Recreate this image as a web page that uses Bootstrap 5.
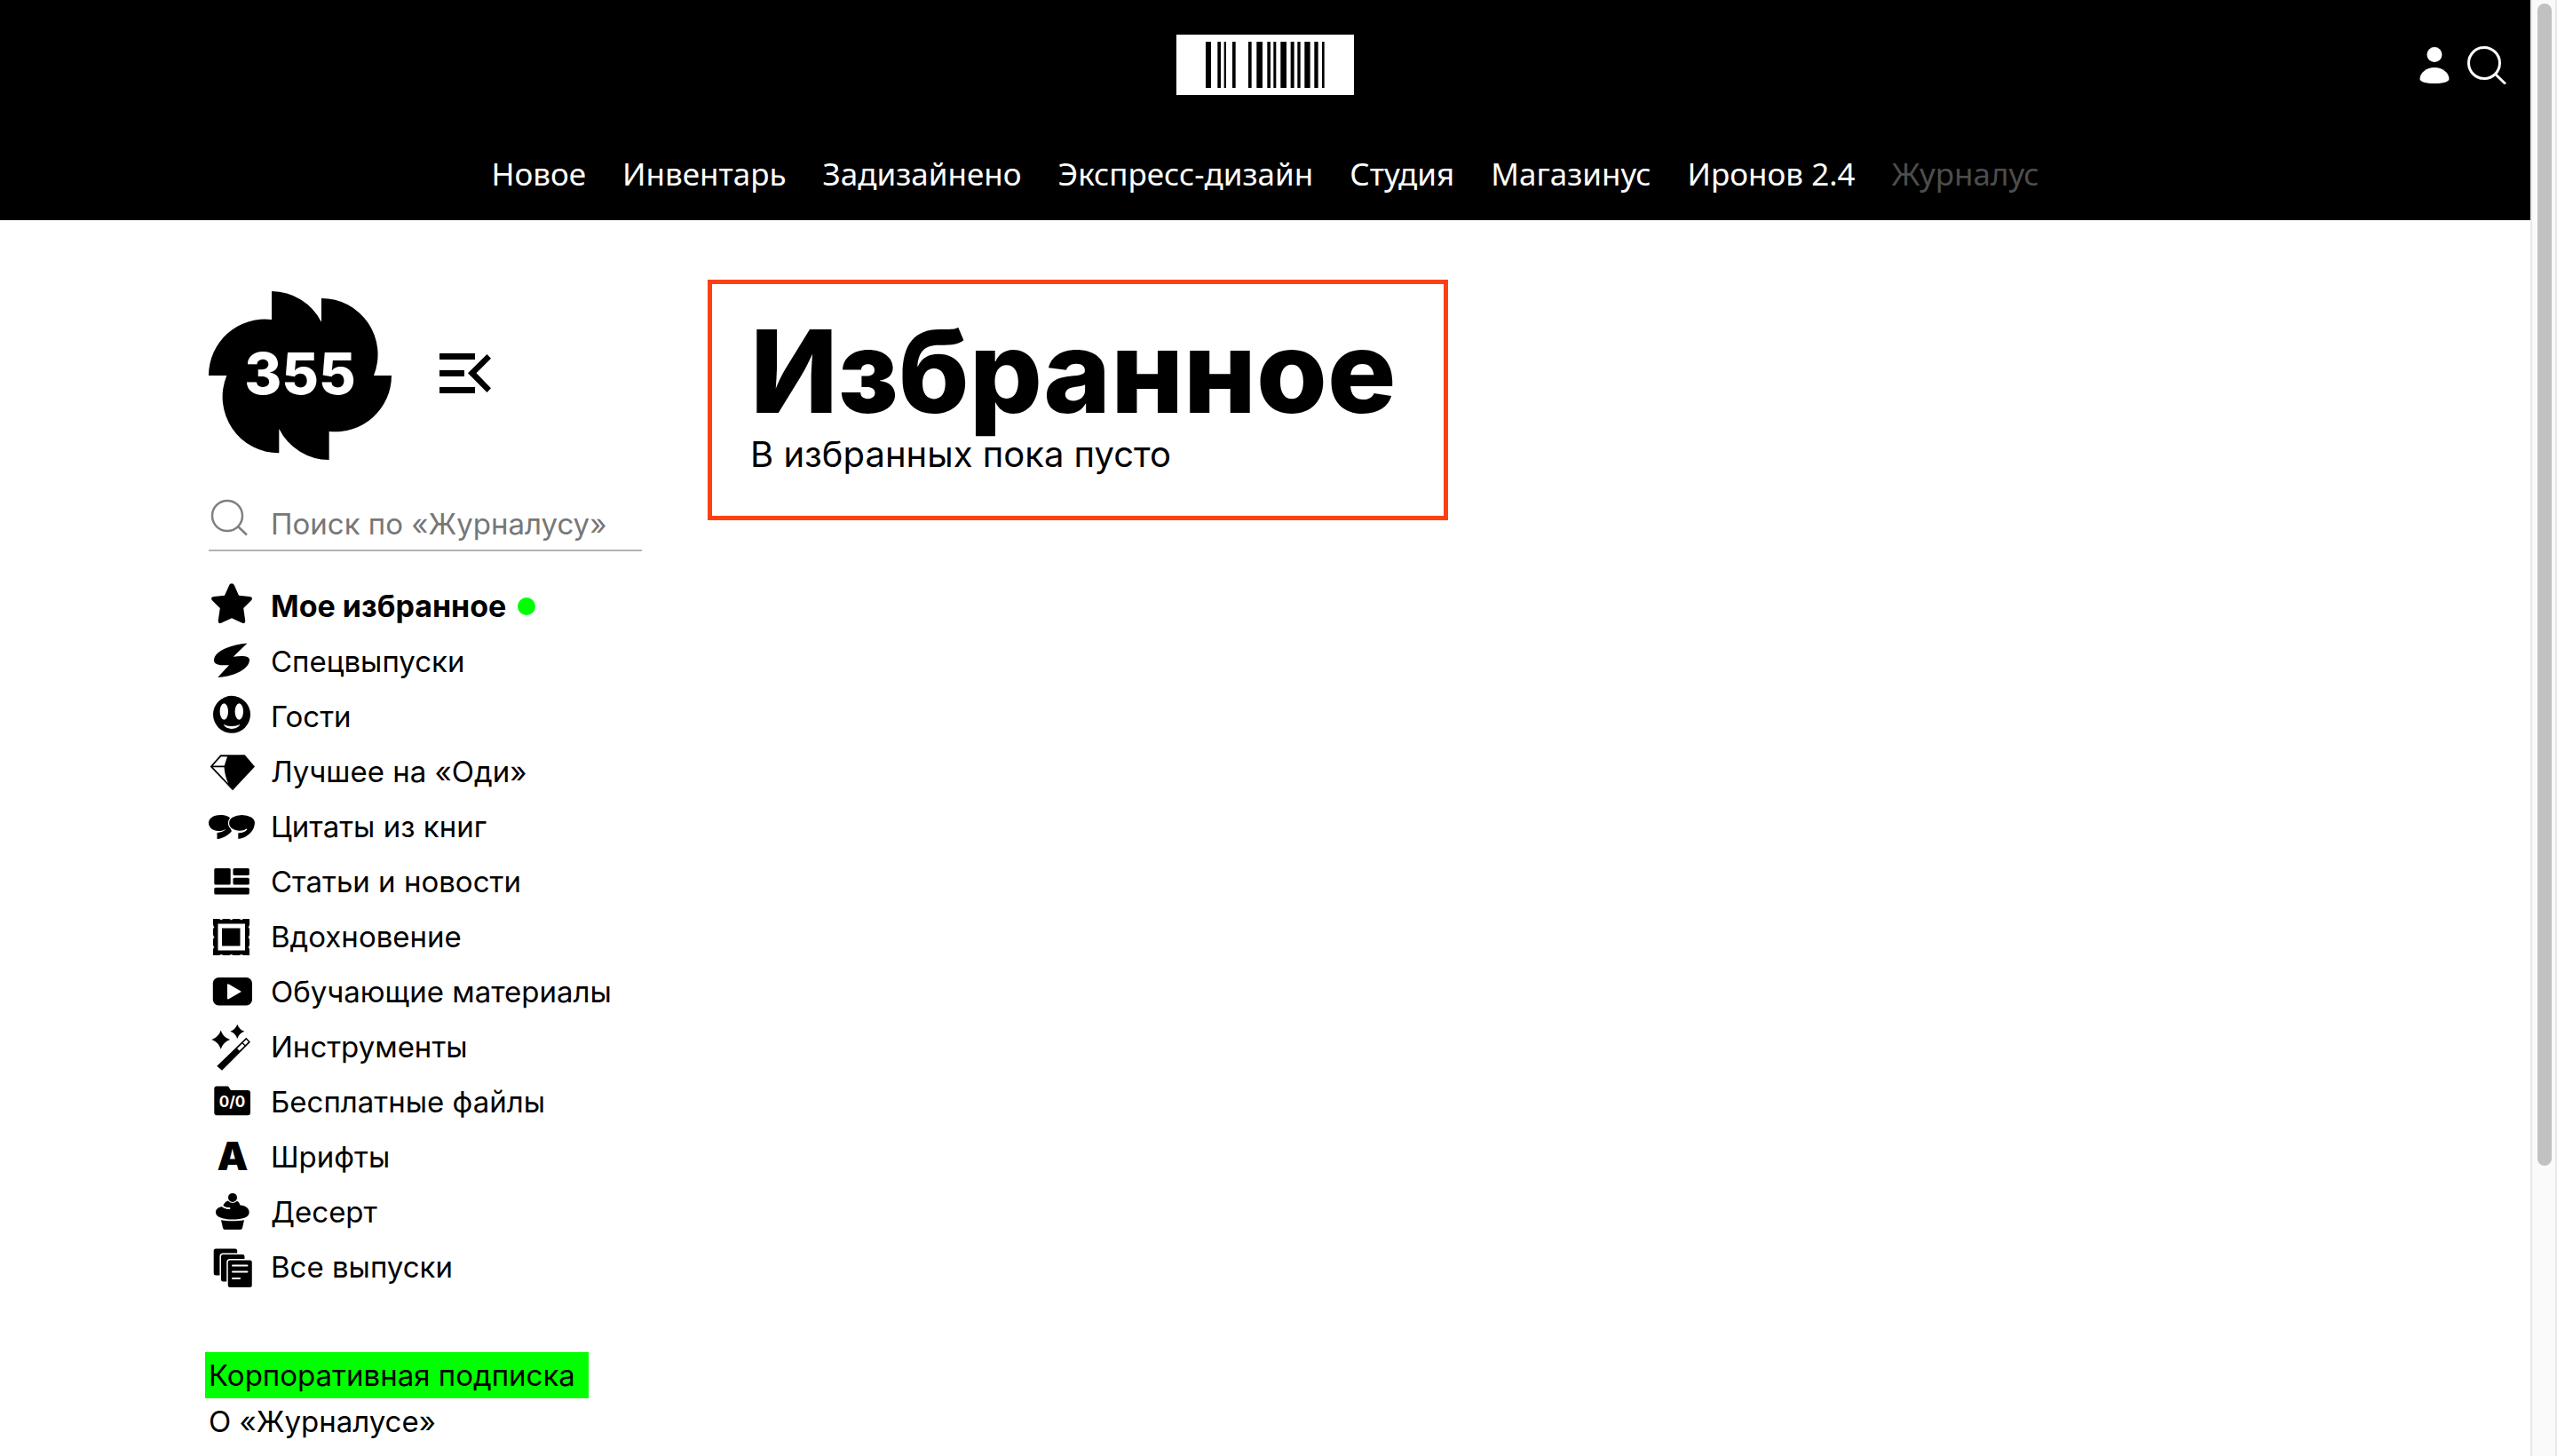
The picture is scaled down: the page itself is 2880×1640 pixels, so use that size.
<!DOCTYPE html>
<html lang="ru">
<head>
<meta charset="utf-8">
<meta name="viewport" content="width=device-width, initial-scale=1">
<title>Избранное — Журналус</title>
<link href="https://cdn.jsdelivr.net/npm/bootstrap@5.3.0/dist/css/bootstrap.min.css" rel="stylesheet">
<style>
  body { font-family: Inter, "Liberation Sans", sans-serif; color: #000; background: #fff; }
  a { color: inherit; text-decoration: none; }
  svg { display: block; flex-shrink: 0; }

  .site-head { background: #000; color: #fff; padding: 39px 27px 28px; }
  .head-icons { gap: 20px; padding-top: 12px; }
  .site-menu { font-family: "Noto Sans", "Open Sans", sans-serif; font-size: 35px; line-height: 48px; gap: 41px; margin-top: 65px; }
  .site-menu .nav-link { padding: 0; color: #fff; }
  .site-menu .nav-link.disabled { color: #4d4d4d; }

  .page-body { padding-left: 235px; gap: 74px; }
  .side-col { width: 488px; padding-top: 80px; }
  .issue-row { gap: 54px; }
  .issue-number { font-size: 64px; font-weight: 800; }
  .plain-btn { background: none; border: 0; padding: 0; color: inherit; }
  .fold-btn { padding-bottom: 4px; }

  .find-row { margin-top: 44px; height: 59px; padding-bottom: 9px; border-bottom: 2px solid #b3b3b3; gap: 18px; color: #777; }
  .find-row input { font-size: 33px; line-height: 40px; padding: 0; border: 0; outline: 0; width: 100%; color: #000; }
  .find-row input::placeholder { color: #777; opacity: 1; }

  .rubrics { margin-top: 31px; font-size: 33px; line-height: 62px; }
  .rubrics a { gap: 18px; }
  .rubrics .fw-bold { font-size: 34px; }
  .new-dot { width: 20px; height: 20px; border-radius: 50%; background: #0f0; margin-left: -5px; }
  .folder-text { font-size: 17px; font-weight: 700; }
  .letter-icon { font-size: 44px; font-weight: 900; }

  .extra-links { margin-top: 65px; font-size: 33px; line-height: 52px; }
  .promo-link { background: #0f0; margin-left: -4px; padding: 0 15px 0 4px; }

  .main-col { padding-top: 67px; }
  .fav-box { border: 5px solid #ff4013; padding: 34px 54px 45px 43px; }
  .fav-box h1 { font-size: 129px; line-height: 128px; font-weight: 800; margin: 0 0 6px; }
  .fav-box p { font-size: 40px; line-height: 48px; margin: 0; }

  .scroll-track { width: 30px; background: #fafafa; border: 2px solid #e8e8e8; border-width: 0 2px; padding: 4px 4px 0 6px; }
  .scroll-thumb { height: calc(80vh - 3px); border-radius: 8px; background: #c1c1c1; }
</style>
</head>
<body>
<div class="d-flex vh-100 overflow-hidden">
  <div class="flex-grow-1">

    <header class="site-head">
      <div class="d-flex align-items-start">
        <div class="flex-fill w-100"></div>
        <a href="#" aria-label="Главная">
          <svg width="200" height="68" viewBox="0 0 600 204"><path fill="#fff" d="M0 0h600v204H0z"/><path fill="#000" d="M99 24h18v156H99zM139 24h11v156h-11zM161 24h7v156h-7zM189 24h11v156h-11zM243 24h11v156h-11zM271 24h20v156h-20zM307 24h11v156h-11zM328 24h9v156h-9zM352 24h20v156h-20zM386 24h12v156h-12zM409 24h10v156h-10zM433 24h19v156h-19zM466 24h13v156h-13zM492 24h8v156h-8z"/></svg>
        </a>
        <div class="head-icons d-flex justify-content-end flex-fill w-100">
          <button class="plain-btn" type="button" aria-label="Профиль">
            <svg width="34" height="44" viewBox="0 0 34 44" fill="#fff"><circle cx="17" cy="10.500" r="8.500"/><path d="M.500 38C.500 31 8 25 17 25s16.500 6 16.500 13c0 3-7 5-16.500 5S.500 41 .500 38z"/></svg>
          </button>
          <button class="plain-btn" type="button" aria-label="Поиск">
            <svg width="44" height="44" viewBox="0 0 44 44" fill="none" stroke="#fff" stroke-width="3"><circle cx="19" cy="20" r="17.500"/><path d="M31.500 32.500L43 43.500"/></svg>
          </button>
        </div>
      </div>
      <nav class="site-menu nav justify-content-center flex-nowrap text-nowrap">
        <a class="nav-link" href="#">Новое</a>
        <a class="nav-link" href="#">Инвентарь</a>
        <a class="nav-link" href="#">Задизайнено</a>
        <a class="nav-link" href="#">Экспресс-дизайн</a>
        <a class="nav-link" href="#">Студия</a>
        <a class="nav-link" href="#">Магазинус</a>
        <a class="nav-link" href="#">Иронов 2.4</a>
        <a class="nav-link disabled" href="#" aria-current="page">Журналус</a>
      </nav>
    </header>

    <div class="page-body d-flex align-items-start">
      <aside class="side-col flex-shrink-0">
        <div class="issue-row d-flex align-items-center">
          <a href="#">
            <svg width="206" height="190" viewBox="0 0 206 190">
              <path transform="scale(.3333)" d="M213 0A190 190 0 0 1 381 104V24A190 190 0 0 1 558 285H618A190 190 0 0 1 407 474V570A190 190 0 0 1 238 465V547A190 190 0 0 1 61 285H0A190 190 0 0 1 213 96Z"/>
              <text class="issue-number" x="103" y="116" text-anchor="middle" fill="#fff">355</text>
            </svg>
          </a>
          <button class="plain-btn fold-btn" type="button" aria-label="Свернуть меню">
            <svg width="58" height="46" viewBox="0 0 58 46"><path d="M0 0h40v7H0zM0 19h28v7H0zM0 38h40v7H0zM53.500 1L58 5.700 41.500 22.300 58 39.300 53.500 44 32 22.300z"/></svg>
          </button>
        </div>

        <form class="find-row d-flex align-items-end">
          <label for="find">
            <svg width="52" height="50" viewBox="0 0 52 50" fill="none" stroke="#808080" stroke-width="2.500" aria-label="Поиск"><circle cx="21" cy="21" r="17"/><path d="M33 33l10 9.500"/></svg>
          </label>
          <input id="find" type="text" placeholder="Поиск по «Журналусу»">
        </form>

        <ul class="rubrics list-unstyled mb-0 text-nowrap">
          <li><a class="d-flex align-items-center fw-bold" href="#">
            <svg width="52" height="62" viewBox="0 0 52 62"><path d="M26 5.300c1.500 0 2.300.800 3 2.200l5 11.200 12 1.200c3 .400 4 2.500 1.800 4.600l-8.600 8.500 2 13.800c.300 2.800-1.500 3.800-3.900 2.700L26 44.200l-11.300 5.300c-2.400 1.100-4.200.100-3.900-2.700l2-13.800-8.600-8.500C2 22.400 3 20.300 6 19.900l12-1.200 5-11.200c.700-1.400 1.500-2.200 3-2.200z"/></svg>
            <span>Мое избранное</span><span class="new-dot"></span></a></li>
          <li><a class="d-flex align-items-center" href="#">
            <svg width="52" height="62" viewBox="0 0 52 62"><path d="M43.500 10.500C26 12 6.500 19 6 29.500c-.200 5.500 8 6.300 17 5.700L10.300 49C28 48 45.500 40 46 29.500c.200-5-8-4.900-18.300-3.800z"/></svg>
            <span>Спецвыпуски</span></a></li>
          <li><a class="d-flex align-items-center" href="#">
            <svg width="52" height="62" viewBox="0 0 52 62"><circle cx="26" cy="28.800" r="21"/><g fill="#fff"><ellipse cx="17.300" cy="25.500" rx="4.700" ry="9.200"/><ellipse cx="34.300" cy="25.500" rx="4.700" ry="9.200"/><path d="M16.700 39.800c5 3 13.600 3 18.600 0-2.500 6.800-16 6.800-18.600 0z"/></g></svg>
            <span>Гости</span></a></li>
          <li><a class="d-flex align-items-center" href="#">
            <svg width="52" height="62" viewBox="0 0 52 62"><path d="M13.300 12.300h27.400L52 25.500 27 52.200 1.700 25.500z"/><path fill="#fff" d="M14 14.200h7l-3.300 10.300H4.800zM4.800 26.300h12.700c.500 6 2 12.500 4.500 18z"/></svg>
            <span>Лучшее на «Оди»</span></a></li>
          <li><a class="d-flex align-items-center" href="#">
            <svg width="52" height="62" viewBox="0 0 52 62"><path d="M13 18C5 18 0 22 0 27s5 9 11 9c3.500 0 6-.600 8.500-2.500-2 3-6 4-10 4.500V45c5 0 13-4 16.500-9z"/><path d="M13 18c5 0 9 1 11.500 3.500L25 36l-12-5z"/><path stroke="#fff" stroke-width="1.200" d="M37.500 17.400c-8.500 0-15 4-15 9.600s5.500 9.300 12 9.300c3.500 0 6.500-.800 8.500-2.300-2 2.800-6 3.800-10.300 4v7.500c9 0 19.800-8.500 19.800-18.500 0-5.800-6.500-9.600-15-9.600z"/></svg>
            <span>Цитаты из книг</span></a></li>
          <li><a class="d-flex align-items-center" href="#">
            <svg width="52" height="62" viewBox="0 0 52 62"><rect x="6.300" y="16" width="18.400" height="18.500" rx="1.500"/><rect x="27.500" y="16" width="18.300" height="8" rx="1.500"/><rect x="27.500" y="26.800" width="18.300" height="7.700" rx="1.500"/><rect x="6.300" y="37.800" width="39.500" height="7.700" rx="1.500"/></svg>
            <span>Статьи и новости</span></a></li>
          <li><a class="d-flex align-items-center" href="#">
            <svg width="52" height="62" viewBox="0 0 52 62"><path fill="none" stroke="#000" stroke-width="7" stroke-linecap="round" stroke-dasharray="5 6.330" stroke-dashoffset="2.500" d="M8.500 14.500h34v34h-34z"/><path fill="none" stroke="#000" stroke-width="4" d="M8.500 14.500h34v34h-34z"/><path fill="#fff" d="M10.500 16.500h30.500v30H10.500z"/><path d="M15 21.500h20.500v20H15z"/></svg>
            <span>Вдохновение</span></a></li>
          <li><a class="d-flex align-items-center" href="#">
            <svg width="52" height="62" viewBox="0 0 52 62"><rect x="4.800" y="15" width="44.200" height="31.500" rx="6.500"/><path fill="#fff" d="M21 23.200c0-.900.800-1.200 1.600-.800L36 30.200c.700.400.700.900 0 1.300l-13.400 7.800c-.800.400-1.600.100-1.600-.800z"/></svg>
            <span>Обучающие материалы</span></a></li>
          <li><a class="d-flex align-items-center" href="#">
            <svg width="52" height="62" viewBox="0 0 52 62"><path d="M13.700 12.500c2 5.500 5 8.600 10.500 10.600-5.500 2-8.500 5.100-10.500 10.600-2-5.500-5-8.600-10.500-10.600 5.500-2 8.500-5.100 10.500-10.600zM32.300 5.700c1.600 4.200 3.900 6.500 8 8.100-4.100 1.600-6.400 3.900-8 8.100-1.600-4.200-3.900-6.500-8-8.100 4.100-1.600 6.400-3.900 8-8.100zM9.300 52.800l33-32 4.700 5L15 57.800z"/><path fill="#fff" d="M42.300 23l2.500 2.600-3.600 3.500-2.500-2.600zM37.800 27.400l2.500 2.600-5.700 5.500-2.500-2.600z"/></svg>
            <span>Инструменты</span></a></li>
          <li><a class="d-flex align-items-center" href="#">
            <svg width="52" height="62" viewBox="0 0 52 62"><path d="M9 13.600h12.500c1.500 0 2.500 4.400 4 4.400H44c2 0 3 1 3 3v22.300c0 2-1 3-3 3H9.300c-2 0-3-1-3-3V16.500c0-2 1-2.900 2.700-2.900z"/><text class="folder-text" x="26.500" y="36.500" text-anchor="middle" fill="#fff">0/0</text></svg>
            <span>Бесплатные файлы</span></a></li>
          <li><a class="d-flex align-items-center" href="#">
            <svg width="52" height="62" viewBox="0 0 52 62"><text class="letter-icon" x="27" y="46" text-anchor="middle">A</text></svg>
            <span>Шрифты</span></a></li>
          <li><a class="d-flex align-items-center" href="#">
            <svg width="52" height="62" viewBox="0 -2 52 62"><path d="M16 23c1-4 4-6.500 8-7h6c3 .800 5 3 5.500 5.500 6 .500 10.200 3.500 10.200 8 0 6-8 8-18.700 8S8 35 8 29.500C8 26 11 23.500 16 23z"/><circle cx="27" cy="12.900" r="5.600" stroke="#fff" stroke-width="1.200"/><path fill="none" stroke="#fff" stroke-width="1.800" stroke-linecap="round" d="M15.500 22.500c2 1.800 4.500 2.600 8 2.500"/><path d="M14 38.300c8 1.300 18 1.300 26 0L38 47c-.300 1.300-1 2-2.300 2H18.300c-1.300 0-2-.700-2.300-2z"/></svg>
            <span>Десерт</span></a></li>
          <li><a class="d-flex align-items-center" href="#">
            <svg width="52" height="62" viewBox="0 -2 52 62"><rect x="5.700" y="8.500" width="26.500" height="30" rx="2.500"/><g stroke="#fff" stroke-width="1.500"><rect x="13.200" y="14.300" width="28" height="32" rx="3"/><rect x="21" y="20.800" width="28.500" height="32" rx="3"/></g><path fill="#fff" d="M5 39h8v8H5zM13 46.500h7.500V53H13zM33 8h9v5.500h-9zM41 14h8v6.200h-8z"/><path fill="none" stroke="#fff" stroke-width="2" stroke-linecap="round" d="M27 27.500h16.500M27 34.500h16.500M27 42h8"/></svg>
            <span>Все выпуски</span></a></li>
        </ul>

        <div class="extra-links d-flex flex-column align-items-start text-nowrap">
          <a class="promo-link" href="#">Корпоративная подписка</a>
          <a href="#">О «Журналусе»</a>
        </div>
      </aside>

      <main class="main-col">
        <section class="fav-box">
          <h1>Избранное</h1>
          <p>В избранных пока пусто</p>
        </section>
      </main>
    </div>
  </div>

  <div class="scroll-track flex-shrink-0" aria-hidden="true"><div class="scroll-thumb"></div></div>
</div>
<script src="https://cdn.jsdelivr.net/npm/bootstrap@5.3.0/dist/js/bootstrap.bundle.min.js"></script>
</body>
</html>
